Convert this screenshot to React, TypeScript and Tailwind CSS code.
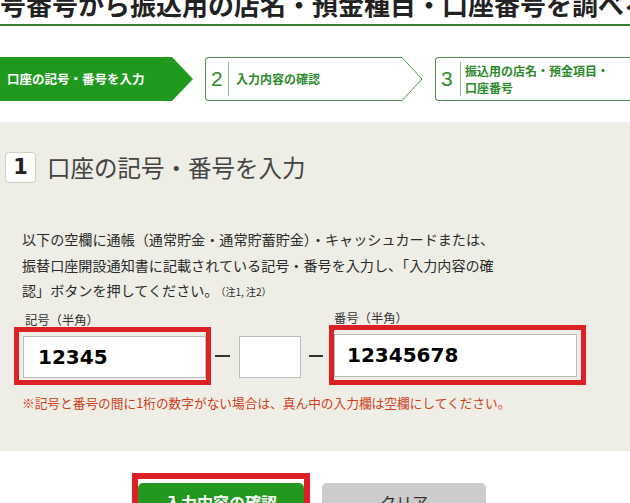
import React from "react"

const jp = { fontFamily: '"Noto Sans CJK JP", "Noto Sans", sans-serif' }
const num = { fontFamily: '"DejaVu Sans", "Liberation Sans", sans-serif' }

function StepArrow() {
  return (
    <svg width="22" height="44" viewBox="0 0 22 44" className="shrink-0">
      <path d="M0 0.5 H1 L21 22 L1 43.5 H0" fill="white" stroke="#4c934c" />
    </svg>
  )
}

export default function App() {
  return (
    <div className="w-[630px] h-[503px] overflow-hidden bg-white text-[#333]" style={jp}>
      {/* 見出し */}
      <div className="border-b-2 border-[#3a7d35] pb-[5px]">
        <h1 className="-mt-[11px] text-[26px] leading-[30px] font-bold whitespace-nowrap overflow-hidden text-[#222]">
          号番号から振込用の店名・預金種目・口座番号を調べる
        </h1>
      </div>

      {/* ステップ */}
      <div className="mt-[31px] flex w-[720px] gap-[12px] h-[44px]">
        <div className="w-[193px] h-[44px] bg-[#1f9a1f] flex items-center pl-[7px] [clip-path:polygon(0_0,172px_0,100%_50%,172px_100%,0_100%)]">
          <span className="text-white text-[12.5px] font-bold">口座の記号・番号を入力</span>
        </div>

        <div className="flex">
          <div className="w-[196px] flex items-center border border-r-0 border-[#4c934c] rounded-l-[4px] bg-white pl-[5px]">
            <span className="text-[21px] text-[#2d8a2d] w-[17px]" style={{ fontFamily: '"Liberation Sans", sans-serif' }}>2</span>
            <div className="w-px h-[34px] bg-[#8dbd8d]" />
            <span className="pl-[7px] text-[12px] font-bold text-[#2d8a2d]">入力内容の確認</span>
          </div>
          <StepArrow />
        </div>

        <div className="w-[260px] flex items-center border border-r-0 border-[#4c934c] rounded-l-[4px] bg-white pl-[5px]">
          <span className="text-[21px] text-[#2d8a2d] w-[19px]" style={{ fontFamily: '"Liberation Sans", sans-serif' }}>3</span>
          <div className="w-px h-[34px] bg-[#8dbd8d]" />
          <span className="pl-[4px] text-[12px] leading-[17px] font-bold text-[#2d8a2d]">
            振込用の店名・預金項目・
            <br />
            口座番号
          </span>
        </div>
      </div>

      {/* 入力パネル */}
      <div className="mt-[21px] bg-[#eeeee6] pt-[30px] pb-[39px]">
        <div className="flex items-center pl-[5px] gap-[11px] h-[31px]">
          <div className="w-[31px] h-[31px] bg-white border border-[#cfcfc6] rounded-[4px] flex items-center justify-center text-[21px] font-bold text-[#222]" style={num}>
            1
          </div>
          <h2 className="text-[23.5px] leading-[31px] text-[#444] font-normal">口座の記号・番号を入力</h2>
        </div>

        <p className="mt-[44px] pl-[22px] text-[14.1px] leading-[25.5px] whitespace-nowrap text-[#2a2a2a]">
          以下の空欄に通帳（通常貯金・通常貯蓄貯金）・キャッシュカードまたは、
          <br />
          振替口座開設通知書に記載されている記号・番号を入力し、「入力内容の確
          <br />
          認」ボタンを押してください。<span className="text-[10px] ml-[2px]">（注1, 注2）</span>
        </p>

        <div className="mt-[5px] flex items-end pl-[14px]">
          <div className="flex flex-col">
            <span className="pl-[11px] text-[12.3px] leading-[16px] -mb-[1px]">記号（半角）</span>
            <div className="relative border-[5px] border-[#dd1f26] pl-[4px] pr-[0px] pt-[4px] pb-[2px]">
              <div className="w-[183px] h-[42px] bg-white border border-[#bcbcbc] flex items-center pl-[14px] text-[20px] font-bold text-black" style={num}>
                12345
              </div>
            </div>
          </div>

          <div className="mb-[28px] ml-[4px] w-[15px] h-[2px] bg-[#333]" />
          <div className="mb-[7px] ml-[9px] w-[62px] h-[42px] bg-white border border-[#bcbcbc]" />
          <div className="mb-[28px] ml-[8px] w-[14px] h-[2px] bg-[#333]" />

          <div className="flex flex-col ml-[6px]">
            <span className="pl-[5px] text-[12.3px] leading-[16px] -mb-[1px]">番号（半角）</span>
            <div className="relative border-[5px] border-[#dd1f26] pl-[0px] pr-[4px] pt-[4px] pb-[3px]">
              <div className="w-[243px] h-[43px] bg-white border border-[#bcbcbc] flex items-center pl-[12px] text-[20px] font-bold text-black" style={num}>
                12345678
              </div>
            </div>
          </div>
        </div>

        <p className="mt-[9px] pl-[22px] text-[12.7px] leading-[18px] text-[#d0401a] whitespace-nowrap">
          ※記号と番号の間に1桁の数字がない場合は、真ん中の入力欄は空欄にしてください。
        </p>
      </div>

      {/* ボタン */}
      <div className="mt-[22px] flex items-start pl-[132px] gap-[12px]">
        <div className="border-[6px] border-[#dd1f26] pt-[4px]">
          <button className="w-[166px] h-[38px] bg-[#23981f] rounded-[5px] text-white text-[16px] leading-[20px] font-bold">
            入力内容の確認
          </button>
        </div>
        <button className="mt-[10px] w-[164px] h-[38px] bg-[#cccccc] rounded-[5px] text-[#333] text-[16px] leading-[20px]">
          クリア
        </button>
      </div>
    </div>
  )
}
